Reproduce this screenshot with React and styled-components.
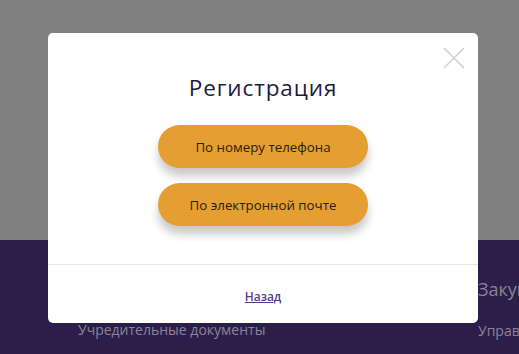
import React from 'react'
import styled, { createGlobalStyle } from 'styled-components'

const Global = createGlobalStyle`
  html, body {
    margin: 0;
    padding: 0;
    height: 100%;
    overflow: hidden;
  }
  body {
    font-family: "Open Sans", "Noto Sans", sans-serif;
  }
`

const Page = styled.div`
  width: 519px;
  height: 354px;
  display: flex;
  flex-direction: column;
`

const Top = styled.div`
  height: 240px;
  background: #808080;
`

const Footer = styled.footer`
  flex: 1;
  background: #2c1e4b;
  display: grid;
  grid-template-columns: 400px 1fr;
  padding: 38px 0 0 78px;
  overflow: hidden;
  white-space: nowrap;
`

const FooterCol = styled.div`
  display: flex;
  flex-direction: column;
  gap: ${p => p.gap}px;
  padding-top: ${p => p.top}px;
`

const FooterTitle = styled.div`
  color: #8a8494;
  font-size: 18px;
  line-height: 22px;
`

const FooterLink = styled.div`
  color: #8a8494;
  font-size: 14px;
  line-height: 18px;
`

const Modal = styled.div`
  position: fixed;
  left: 48px;
  top: 33px;
  width: 430px;
  height: 290px;
  background: #fff;
  border-radius: 5px;
  display: flex;
  flex-direction: column;
`

const Close = styled.button`
  position: absolute;
  right: 13px;
  top: 14px;
  width: 22px;
  height: 22px;
  padding: 0;
  border: 0;
  background: none;
  cursor: pointer;
`

const Body = styled.div`
  height: 232px;
  border-bottom: 1px solid #e6e6e6;
  display: flex;
  flex-direction: column;
  align-items: center;
  padding-top: 39px;
  box-sizing: border-box;
`

const Title = styled.h2`
  margin: 0 0 21px;
  font-family: "Open Sans", sans-serif;
  font-weight: 400;
  font-size: 22.5px;
  letter-spacing: 0.9px;
  line-height: 32px;
  color: #1e1a3c;
`

const Actions = styled.div`
  display: flex;
  flex-direction: column;
  gap: 15px;
`

const PillButton = styled.button`
  width: 210px;
  height: 43px;
  border: 0;
  border-radius: 22px;
  background: #e49e32;
  color: #2a2113;
  font-family: "Open Sans", sans-serif;
  font-size: 13.3px;
  box-shadow: 0 8px 10px rgba(0, 0, 0, 0.22);
  cursor: pointer;
`

const Bottom = styled.div`
  flex: 1;
  display: flex;
  align-items: center;
  justify-content: center;
  padding-top: 4px;
`

const BackLink = styled.a`
  color: #553b8c;
  font-size: 12px;
  font-weight: 600;
  text-decoration: underline;
  cursor: pointer;
`

export default function App() {
  return (
    <>
      <Global />
      <Page>
        <Top />
        <Footer>
          <FooterCol top={43} gap={0}>
            <FooterLink>Учредительные документы</FooterLink>
          </FooterCol>
          <FooterCol top={0} gap={22}>
            <FooterTitle>Закупки</FooterTitle>
            <FooterLink>Управление</FooterLink>
          </FooterCol>
        </Footer>
      </Page>
      <Modal>
        <Close aria-label="Закрыть">
          <svg width="22" height="22" viewBox="0 0 22 22">
            <path d="M1 1L21 21M21 1L1 21" stroke="#d0d0d4" strokeWidth="1.6" />
          </svg>
        </Close>
        <Body>
          <Title>Регистрация</Title>
          <Actions>
            <PillButton>По номеру телефона</PillButton>
            <PillButton>По электронной почте</PillButton>
          </Actions>
        </Body>
        <Bottom>
          <BackLink>Назад</BackLink>
        </Bottom>
      </Modal>
    </>
  )
}
